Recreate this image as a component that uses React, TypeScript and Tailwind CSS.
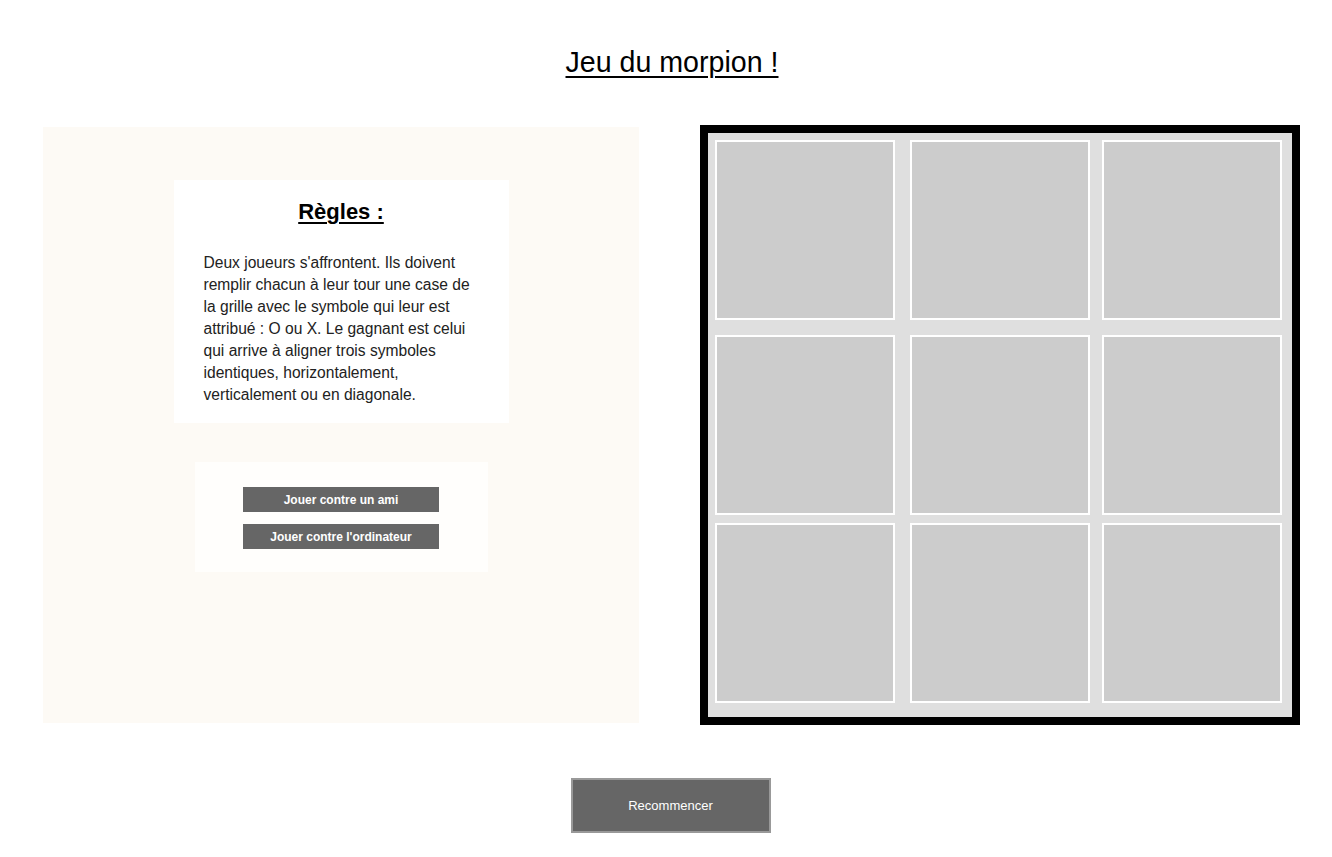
export default function App() {
  const cells = Array.from({ length: 9 })

  return (
    <div className="min-h-screen bg-white font-['Liberation_Sans',Arial,sans-serif] text-black">
      <h1 className="pl-[12px] pt-[46px] text-center text-[28.6px] leading-[32px] underline underline-offset-[4px] decoration-[2px]">
        Jeu du morpion !
      </h1>

      <div className="mt-[47px] flex items-center gap-[61px] pl-[43px]">
        {/* Rules + mode choice */}
        <div className="flex h-[596px] w-[596px] flex-col items-center bg-[#fdfaf5] pt-[53px]">
          <div className="w-[335px] bg-white pb-[17px] pl-[30px] pr-[33px] pt-[19px]">
            <h2 className="pl-[3px] text-center text-[22px] font-bold leading-[26px] underline underline-offset-[3px]">
              Règles :
            </h2>
            <p className="mt-[27px] text-[15.6px] leading-[22px] text-[#222]">
              Deux joueurs s'affrontent. Ils doivent remplir chacun à leur tour
              une case de la grille avec le symbole qui leur est attribué : O ou
              X. Le gagnant est celui qui arrive à aligner trois symboles
              identiques, horizontalement, verticalement ou en diagonale.
            </p>
          </div>

          <div className="mt-[39px] flex h-[110px] w-[293px] flex-col items-center gap-[12px] bg-[#fffefc] pt-[25px]">
            <button className="h-[25px] w-[196px] bg-[#666] text-[12px] font-bold text-white">
              Jouer contre un ami
            </button>
            <button className="h-[25px] w-[196px] bg-[#666] text-[12px] font-bold text-white">
              Jouer contre l'ordinateur
            </button>
          </div>
        </div>

        {/* Board */}
        <div className="h-[600px] w-[600px] border-[8px] border-black bg-[#dfdfdf] pl-[7px] pt-[7px]">
          <div className="grid grid-cols-[195px_192px_180px] grid-rows-[195px_188px_180px]">
            {cells.map((_, i) => (
              <div
                key={i}
                className="h-[180px] w-[180px] border-2 border-white bg-[#cccccc]"
              />
            ))}
          </div>
        </div>
      </div>

      <div className="mt-[53px] flex justify-center">
        <button className="ml-[9px] h-[55px] w-[200px] border-2 border-[#999] bg-[#666] text-[13px] text-white">
          Recommencer
        </button>
      </div>
    </div>
  )
}
